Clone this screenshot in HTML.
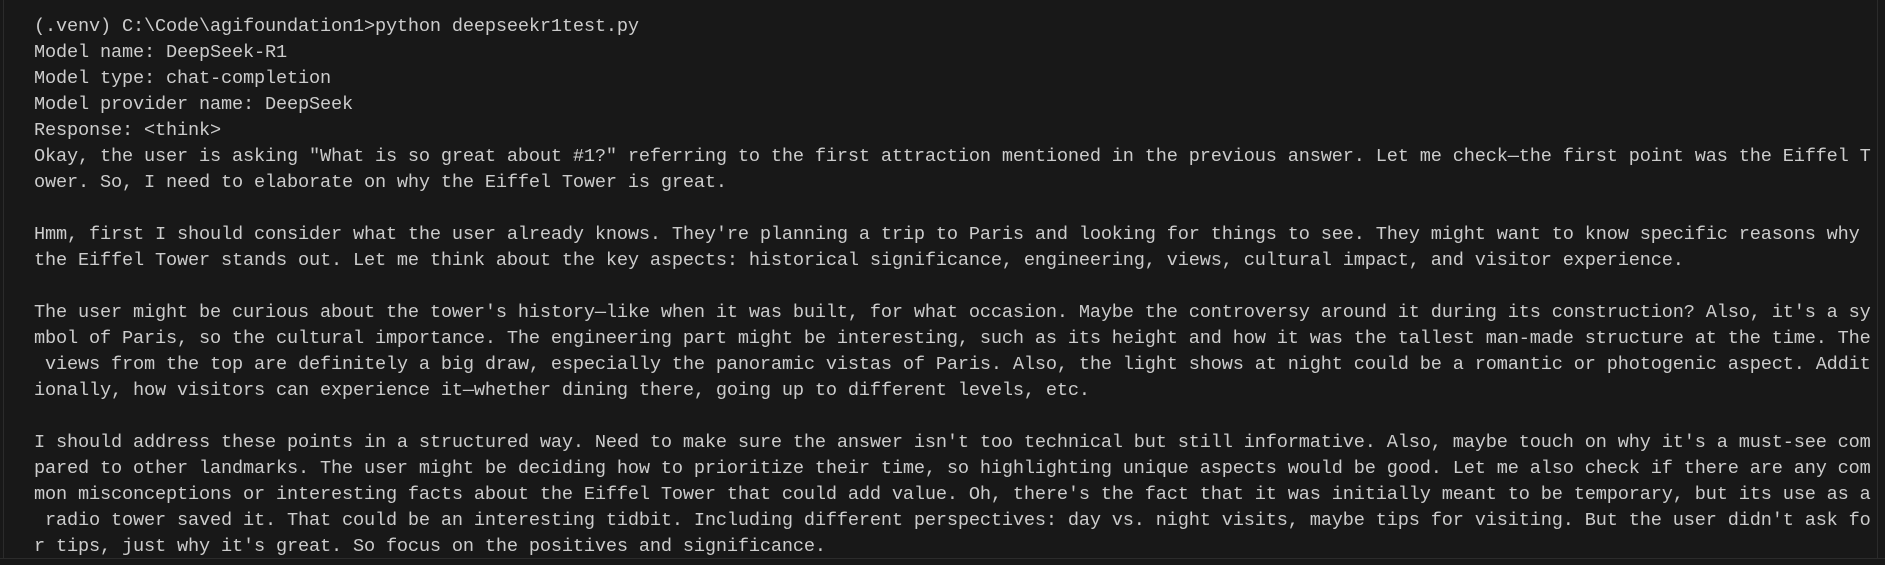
<!DOCTYPE html>
<html><head><meta charset="utf-8"><style>
html,body{margin:0;padding:0;background:#181818;width:1885px;height:565px;overflow:hidden;}
.l{position:absolute;left:3px;top:0;width:1px;height:558px;background:#2b2b2b;}
.r{position:absolute;left:1877px;top:0;width:1px;height:558px;background:#2b2b2b;}
.b{position:absolute;left:0;top:558px;width:1885px;height:1px;background:#2b2b2b;}
pre{position:absolute;left:34px;top:14px;margin:0;font-family:"Liberation Mono",monospace;font-size:18.6px;letter-spacing:-0.16px;line-height:26px;color:#cccccc;white-space:pre;}
</style></head><body>
<div class="l"></div><div class="r"></div><div class="b"></div>
<pre>(.venv) C:\Code\agifoundation1>python deepseekr1test.py
Model name: DeepSeek-R1
Model type: chat-completion
Model provider name: DeepSeek
Response: &lt;think&gt;
Okay, the user is asking "What is so great about #1?" referring to the first attraction mentioned in the previous answer. Let me check—the first point was the Eiffel T
ower. So, I need to elaborate on why the Eiffel Tower is great.

Hmm, first I should consider what the user already knows. They're planning a trip to Paris and looking for things to see. They might want to know specific reasons why
the Eiffel Tower stands out. Let me think about the key aspects: historical significance, engineering, views, cultural impact, and visitor experience.

The user might be curious about the tower's history—like when it was built, for what occasion. Maybe the controversy around it during its construction? Also, it's a sy
mbol of Paris, so the cultural importance. The engineering part might be interesting, such as its height and how it was the tallest man-made structure at the time. The
 views from the top are definitely a big draw, especially the panoramic vistas of Paris. Also, the light shows at night could be a romantic or photogenic aspect. Addit
ionally, how visitors can experience it—whether dining there, going up to different levels, etc.

I should address these points in a structured way. Need to make sure the answer isn't too technical but still informative. Also, maybe touch on why it's a must-see com
pared to other landmarks. The user might be deciding how to prioritize their time, so highlighting unique aspects would be good. Let me also check if there are any com
mon misconceptions or interesting facts about the Eiffel Tower that could add value. Oh, there's the fact that it was initially meant to be temporary, but its use as a
 radio tower saved it. That could be an interesting tidbit. Including different perspectives: day vs. night visits, maybe tips for visiting. But the user didn't ask fo
r tips, just why it's great. So focus on the positives and significance.</pre>
</body></html>
